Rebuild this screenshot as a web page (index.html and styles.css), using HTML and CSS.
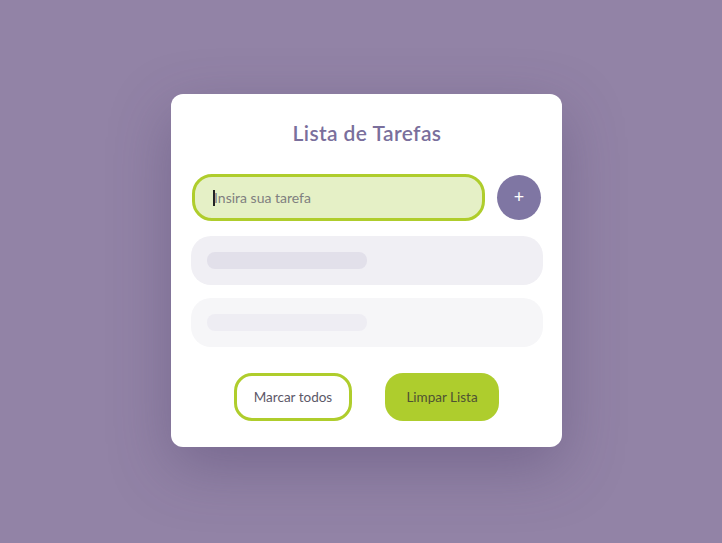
FILE: index.html
```html
<!DOCTYPE html>
<html lang="pt">
<head>
<meta charset="utf-8">
<title>Lista de Tarefas</title>
<link rel="stylesheet" href="styles.css">
</head>
<body>
<main class="page">
  <section class="card">
    <h1 class="title">Lista de Tarefas</h1>
    <div class="entry">
      <div class="field"><span class="caret"></span><span class="placeholder">Insira sua tarefa</span></div>
      <button class="add">+</button>
    </div>
    <div class="row row-a"><span class="bar"></span></div>
    <div class="row row-b"><span class="bar"></span></div>
    <div class="actions">
      <button class="btn btn-outline">Marcar todos</button>
      <button class="btn btn-fill">Limpar Lista</button>
    </div>
  </section>
</main>
</body>
</html>
```

FILE: styles.css
```css
* { box-sizing: border-box; }
html, body { margin: 0; height: 100%; }
body {
  background: #9283a6;
  font-family: "Lato", "Open Sans", sans-serif;
}
.page {
  height: 100%;
  display: flex;
  justify-content: center;
  align-items: flex-start;
  padding-top: 94px;
  padding-left: 11px;
}
.card {
  width: 391px;
  height: 353px;
  background: #ffffff;
  border-radius: 12px;
  box-shadow: 0 20px 60px rgba(70, 55, 100, 0.35);
  padding: 27px 19px 26px 20px;
  display: flex;
  flex-direction: column;
}
.title {
  margin: 0;
  text-align: center;
  font-size: 21px;
  line-height: 24px;
  font-weight: 600;
  letter-spacing: 0.4px;
  color: #7a6f9c;
}
.entry {
  margin-top: 29px;
  display: flex;
  align-items: center;
  gap: 12px;
  padding-left: 1px;
}
.field {
  width: 293px;
  height: 47px;
  border: 3px solid #afcd2c;
  background: #e5f0c6;
  border-radius: 20px;
  display: flex;
  align-items: center;
  padding-left: 18px;
}
.caret {
  width: 2px;
  height: 16px;
  background: #222;
  margin-right: -1px;
}
.placeholder {
  font-size: 14px;
  color: #7f7f7f;
}
.add {
  width: 44px;
  height: 45px;
  border-radius: 50%;
  border: none;
  background: #7f76a3;
  color: #fff;
  font-size: 18px;
  font-family: inherit;
  padding: 0 0 3px;
  cursor: pointer;
}
.row {
  height: 49px;
  border-radius: 20px;
  display: flex;
  align-items: center;
  padding-left: 16px;
}
.row-a { margin-top: 15px; background: #f0eff4; }
.row-b { margin-top: 13px; background: #f6f6f8; }
.bar {
  width: 160px;
  height: 17px;
  border-radius: 8px;
}
.row-a .bar { background: #e2e0ea; }
.row-b .bar { background: #eeedf3; }
.actions {
  margin-top: 26px;
  padding-right: 1px;
  display: flex;
  justify-content: center;
  gap: 33px;
}
.btn {
  height: 48px;
  border-radius: 18px;
  font-family: inherit;
  font-size: 13.5px;
  cursor: pointer;
}
.btn-outline {
  width: 118px;
  background: #fff;
  border: 3px solid #afcd2c;
  color: #5c5868;
}
.btn-fill {
  width: 114px;
  background: #aecd2d;
  border: none;
  color: #4e5233;
}
```
